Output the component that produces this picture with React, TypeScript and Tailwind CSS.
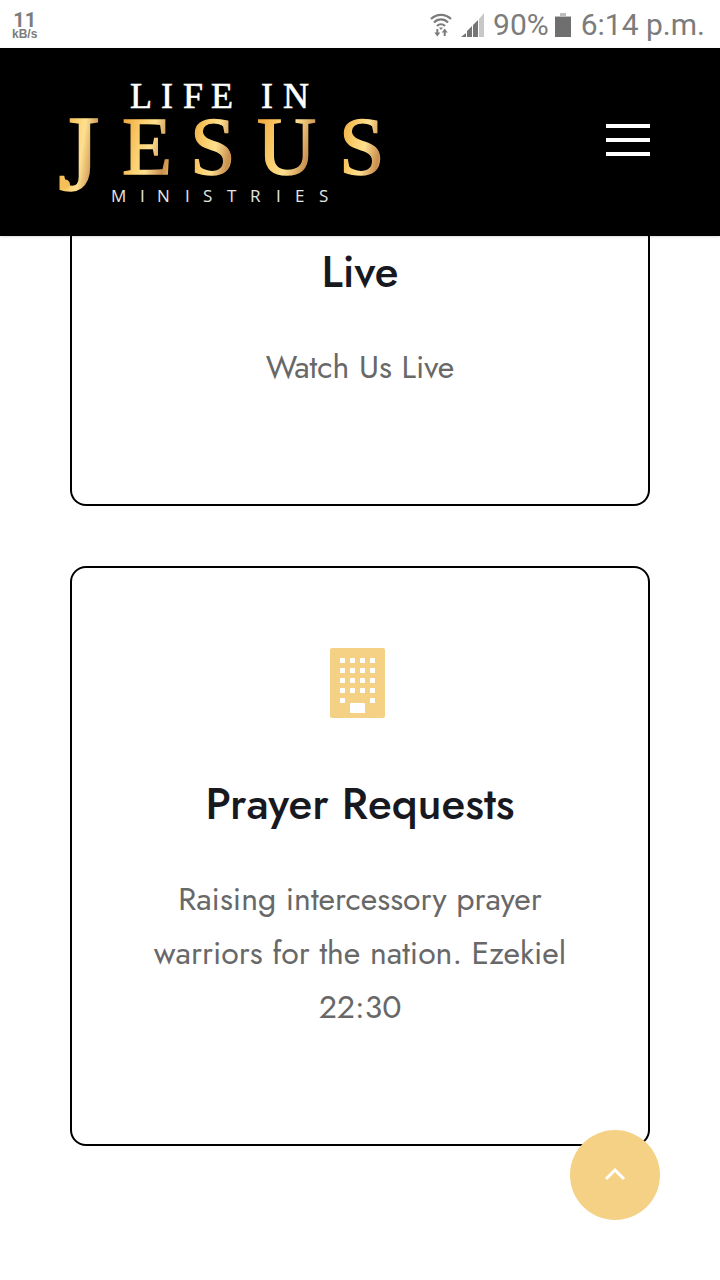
import type { ReactNode } from "react";

function StatusBar() {
  return (
    <div className="flex h-12 items-center justify-between bg-white pl-3 pr-[15px] font-['Roboto',sans-serif] text-[#7c7c7c]">
      <div className="flex flex-col items-center pt-1 font-bold">
        <span className="text-xl leading-4">11</span>
        <span className="font-['Liberation_Sans',sans-serif] text-xs leading-3">kB/s</span>
      </div>
      <div className="flex items-center pt-px">
        <svg className="mr-2 h-7 w-6" viewBox="0 0 24 28" fill="none" stroke="currentColor" strokeWidth="2.2">
          <path d="M2 8a14 14 0 0 1 20 0M5 11.500a9.500 9.500 0 0 1 14 0M8 15a5.500 5.500 0 0 1 8 0" />
          <path d="M10 16.500h4l-2 2.500z" fill="currentColor" stroke="none" />
          <path d="M8.300 18v5M15.700 25v-5" strokeWidth="2" />
          <path d="M5.300 21.500h6l-3 4zM12.700 21.500h6l-3-4z" fill="currentColor" stroke="none" />
        </svg>
        <svg className="mr-2 h-6 w-6" viewBox="0 0 24 24">
          <path d="M0 24l5-4v4zM6 24v-6l5-5v11zM12 24V12l5-5v17z" fill="#757575" />
          <path d="M18 24V6l5-6v24z" fill="#c8c8c8" />
        </svg>
        <span className="text-3xl leading-8">90%</span>
        <svg className="ml-1.5 mr-2.5 h-6 w-4" viewBox="0 0 16 24">
          <path d="M5 0h6v3h5v3H0V3h5z" fill="#bdbdbd" />
          <path d="M0 4h16v20H0z" fill="#6f6f6f" />
        </svg>
        <span className="text-3xl leading-8">6:14 p.m.</span>
      </div>
    </div>
  );
}

function Logo() {
  return (
    <svg className="h-[148px] w-[340px]" viewBox="50 66 340 148" role="img" aria-label="Life in Jesus Ministries">
      <defs>
        <linearGradient id="gold" x1="0" y1="0.3" x2="1" y2="0.7">
          <stop offset="0" stopColor="#f0a93c" />
          <stop offset="0.35" stopColor="#fbd070" />
          <stop offset="0.55" stopColor="#ffe08f" />
          <stop offset="0.85" stopColor="#c98f50" />
          <stop offset="1" stopColor="#e9b45c" />
        </linearGradient>
      </defs>
      <g fontFamily="'Liberation Serif', serif">
        <text x="130 161 183 211 240 261 283" y="108" fontSize="36" fill="#fff" stroke="#fff" strokeWidth="0.6">
          LIFE IN
        </text>
        <g fill="url(#gold)" stroke="url(#gold)" strokeWidth="1.4">
          <text x="58" y="190" fontSize="107">J</text>
          <text x="122" y="174" fontSize="82">E</text>
          <text x="190" y="174" fontSize="82">S</text>
          <text x="257" y="174" fontSize="82">U</text>
          <text x="339" y="174" fontSize="82">S</text>
        </g>
        <circle cx="65" cy="184.500" r="5" fill="#f7bf58" />
      </g>
      <text
        x="111 140 157 185 203 227 250 276 295 319"
        y="202"
        fontFamily="'Open Sans', sans-serif"
        fontSize="17"
        fill="#e5e5e5"
      >
        MINISTRIES
      </text>
    </svg>
  );
}

function Header() {
  return (
    <header className="relative flex h-47 items-center justify-between bg-black pb-1 pl-[50px] pr-[70px] shadow-sm">
      <a href="#">
        <Logo />
      </a>
      <button type="button" aria-label="Menu" className="flex w-11 flex-col gap-2.5">
        <span className="h-1 bg-white" />
        <span className="h-1 bg-white" />
        <span className="h-1 bg-white" />
      </button>
    </header>
  );
}

function BuildingIcon() {
  const windows = [0, 1, 2, 3, 4].flatMap((row) =>
    [0, 1, 2, 3].map((col) => ({ row, col })),
  );

  return (
    <svg className="h-[70px] w-[55px]" viewBox="0 0 55 70" aria-hidden="true">
      <rect width="55" height="70" rx="2" fill="#f5d186" />
      {windows
        .filter(({ row, col }) => row < 4 || col === 0 || col === 3)
        .map(({ row, col }) => (
          <rect key={`${row}-${col}`} x={10 + col * 10} y={10 + row * 10} width="5" height="5" rx="0.5" fill="#fff" />
        ))}
      <rect x="20" y="55" width="15" height="10" rx="0.5" fill="#fff" />
    </svg>
  );
}

function CardText({ title, children }: { title: string; children: ReactNode }) {
  return (
    <>
      <h3 className="text-[44px] font-medium leading-[52px] text-[#18181f]">{title}</h3>
      <p className="mt-[42px] text-[32px] leading-[54px] text-[#686868]">{children}</p>
    </>
  );
}

export default function App() {
  return (
    <div className="min-h-screen bg-white font-['Jost','Lato',sans-serif]">
      <StatusBar />
      <Header />

      <main className="flex flex-col gap-15 px-[70px] pb-[134px] text-center">
        {/* Live */}
        <section className="rounded-b-2xl border-2 border-t-0 border-black px-15 pb-[110px] pt-2.5">
          <CardText title="Live">Watch Us Live</CardText>
        </section>

        {/* Prayer requests */}
        <section className="rounded-2xl border-2 border-black px-15 pb-[110px] pt-20">
          <div className="mx-auto mb-15 w-15">
            <BuildingIcon />
          </div>
          <CardText title="Prayer Requests">
            Raising intercessory prayer warriors for the nation. Ezekiel 22:30
          </CardText>
        </section>
      </main>

      <button
        type="button"
        aria-label="Back to top"
        className="fixed bottom-15 right-15 flex size-[90px] items-center justify-center rounded-full bg-[#f5d186]"
      >
        <svg className="h-4 w-6" viewBox="0 0 24 16" fill="none" stroke="#fff" strokeWidth="3">
          <path d="M3 12l9-9 9 9" />
        </svg>
      </button>
    </div>
  );
}
